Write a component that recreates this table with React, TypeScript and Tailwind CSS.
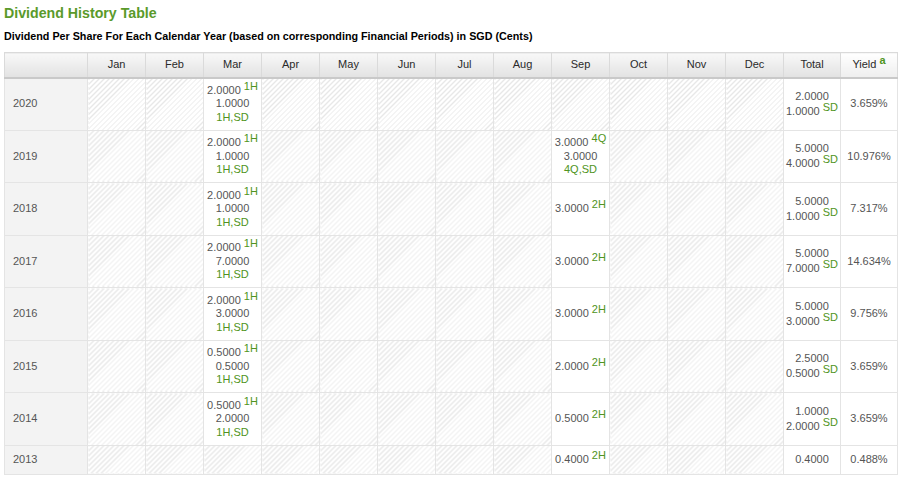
const months = ["Jan", "Feb", "Mar", "Apr", "May", "Jun", "Jul", "Aug", "Sep", "Oct", "Nov", "Dec"];

type Entry = { amt: string; tag?: string; amt2?: string; tag2?: string };

type Row = {
  year: string;
  cells: Record<string, Entry>;
  total: string;
  total2?: string;
  yld: string;
  tall: boolean;
};

const rows: Row[] = [
  { year: "2020", cells: { Mar: { amt: "2.0000", tag: "1H", amt2: "1.0000", tag2: "1H,SD" } }, total: "2.0000", total2: "1.0000", yld: "3.659%", tall: true },
  {
    year: "2019",
    cells: {
      Mar: { amt: "2.0000", tag: "1H", amt2: "1.0000", tag2: "1H,SD" },
      Sep: { amt: "3.0000", tag: "4Q", amt2: "3.0000", tag2: "4Q,SD" },
    },
    total: "5.0000",
    total2: "4.0000",
    yld: "10.976%",
    tall: true,
  },
  { year: "2018", cells: { Mar: { amt: "2.0000", tag: "1H", amt2: "1.0000", tag2: "1H,SD" }, Sep: { amt: "3.0000", tag: "2H" } }, total: "5.0000", total2: "1.0000", yld: "7.317%", tall: true },
  { year: "2017", cells: { Mar: { amt: "2.0000", tag: "1H", amt2: "7.0000", tag2: "1H,SD" }, Sep: { amt: "3.0000", tag: "2H" } }, total: "5.0000", total2: "7.0000", yld: "14.634%", tall: true },
  { year: "2016", cells: { Mar: { amt: "2.0000", tag: "1H", amt2: "3.0000", tag2: "1H,SD" }, Sep: { amt: "3.0000", tag: "2H" } }, total: "5.0000", total2: "3.0000", yld: "9.756%", tall: true },
  { year: "2015", cells: { Mar: { amt: "0.5000", tag: "1H", amt2: "0.5000", tag2: "1H,SD" }, Sep: { amt: "2.0000", tag: "2H" } }, total: "2.5000", total2: "0.5000", yld: "3.659%", tall: true },
  { year: "2014", cells: { Mar: { amt: "0.5000", tag: "1H", amt2: "2.0000", tag2: "1H,SD" }, Sep: { amt: "0.5000", tag: "2H" } }, total: "1.0000", total2: "2.0000", yld: "3.659%", tall: true },
  { year: "2013", cells: { Sep: { amt: "0.4000", tag: "2H" } }, total: "0.4000", yld: "0.488%", tall: false },
];

// diagonal hatch for months with no payout
const hatch =
  "bg-[image:repeating-linear-gradient(135deg,#e8e8e8_0px,#e8e8e8_1px,#ffffff_1px,#ffffff_3.5px)]";

const Tag = ({ children }: { children: React.ReactNode }) => (
  <span className="relative -top-[4px] text-[#4f9421]">{children}</span>
);

const Cell = ({ e }: { e?: Entry }) => {
  if (!e) return <td className={`border border-[#e4e4e4] ${hatch}`} />;
  return (
    <td className="border border-[#e4e4e4] bg-white text-center align-middle">
      <div>
        {e.amt} {e.tag && <Tag>{e.tag}</Tag>}
      </div>
      {e.amt2 && <div>{e.amt2}</div>}
      {e.tag2 && <div className="text-[#4f9421]">{e.tag2}</div>}
    </td>
  );
};

export default function App() {
  return (
    <div className="bg-white pl-[4px] pr-[3px] font-['Liberation_Sans',Arial,sans-serif]">
      <h2 className="pt-[4px] text-[14.2px] font-bold leading-[18px] text-[#5a9a2b]">Dividend History Table</h2>
      <p className="mt-[7px] text-[10.75px] font-bold leading-[14px] text-black">
        Dividend Per Share For Each Calendar Year (based on corresponding Financial Periods) in SGD (Cents)
      </p>

      <table className="mt-[9px] w-[893px] table-fixed border-collapse text-[11px] leading-[13.5px] text-[#555]">
        <colgroup>
          <col className="w-[83px]" />
          {months.map((m) => (
            <col key={m} className="w-[58px]" />
          ))}
          <col className="w-[57px]" />
          <col className="w-[57px]" />
        </colgroup>
        <thead>
          <tr className="h-[25px] border-b-2 border-[#c9c9c9] text-[#2a2a2a]">
            <th className="border border-[#dadada] bg-[linear-gradient(#f8f8f8,#e2e2e2)]" />
            {months.map((m) => (
              <th key={m} className="border border-[#dadada] bg-[linear-gradient(#f8f8f8,#e2e2e2)] text-center font-normal">
                {m}
              </th>
            ))}
            <th className="border border-[#dadada] bg-[linear-gradient(#f8f8f8,#e2e2e2)] text-center font-normal">Total</th>
            <th className="border border-[#dadada] bg-[linear-gradient(#ffffff,#eeeeee)] text-center font-normal">
              Yield <span className="relative -top-[4px] font-bold text-[#4f9421]">a</span>
            </th>
          </tr>
        </thead>
        <tbody>
          {rows.map((r) => (
            <tr key={r.year} className={r.tall ? "h-[52.5px]" : "h-[29px]"}>
              <td className="border border-[#e4e4e4] bg-[#f3f3f3] pl-[8px] text-left align-middle">{r.year}</td>
              {months.map((m) => (
                <Cell key={m} e={r.cells[m]} />
              ))}
              <td className="border border-[#e4e4e4] bg-white text-center align-middle leading-[15px]">
                <div>{r.total}</div>
                {r.total2 && (
                  <div className="whitespace-nowrap">
                    {r.total2} <Tag>SD</Tag>
                  </div>
                )}
              </td>
              <td className="border border-[#e4e4e4] bg-white text-center align-middle">{r.yld}</td>
            </tr>
          ))}
        </tbody>
      </table>
    </div>
  );
}
